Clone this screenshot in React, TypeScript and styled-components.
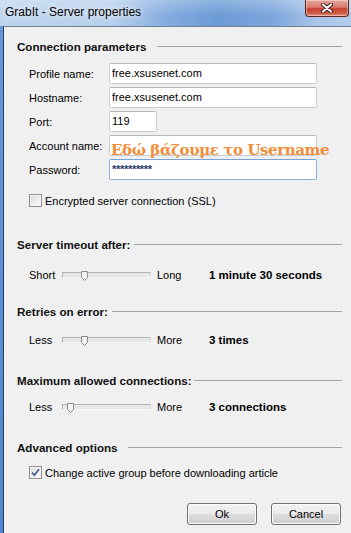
import React from 'react';
import styled, { createGlobalStyle } from 'styled-components';

const GlobalStyle = createGlobalStyle`
  html, body {
    margin: 0;
    padding: 0;
    background: #f0f0f0;
  }

  body {
    font-family: "Liberation Sans", Arial, sans-serif;
    font-size: 11px;
    color: #000;
  }
`;

function CloseGlyph() {
  return (
    <svg width="12" height="10" viewBox="0 0 12 10">
      <path d="M2 1.5 L10 8.5 M10 1.5 L2 8.5" stroke="#3b1a16" strokeWidth="4" strokeLinecap="round" />
      <path d="M2 1.5 L10 8.5 M10 1.5 L2 8.5" stroke="#fff" strokeWidth="2.2" strokeLinecap="round" />
    </svg>
  );
}

function Thumb() {
  return (
    <svg width="7" height="10" viewBox="0 0 7 10">
      <path d="M0.5 0.5 H6.5 V6.5 L3.5 9.5 L0.5 6.5 Z" fill="#f4f4f4" stroke="#8c8c8c" />
    </svg>
  );
}

function CheckMark() {
  return (
    <svg width="9" height="9" viewBox="0 0 9 9">
      <path d="M1 4.6 L3.4 7.2 L8 1.2" fill="none" stroke="#4b5f92" strokeWidth="1.8" />
    </svg>
  );
}

function Header({ title, gap = 10, top }: { title: string; gap?: number; top: number }) {
  return (
    <SectionHeader $gap={gap} $top={top}>
      <span>{title}</span>
      <Rule />
    </SectionHeader>
  );
}

function Slider({
  low,
  high,
  value,
  pos,
  top,
}: {
  low: string;
  high: string;
  value: string;
  pos: number;
  top: number;
}) {
  return (
    <SliderRow $top={top}>
      <SliderLabel $width={33}>{low}</SliderLabel>
      <Track>
        <ThumbHolder style={{ left: pos }}>
          <Thumb />
        </ThumbHolder>
      </Track>
      <SliderLabel $width={52}>{high}</SliderLabel>
      <Value>{value}</Value>
    </SliderRow>
  );
}

export default function App() {
  return (
    <>
      <GlobalStyle />
      <Window>
        <TitleBar>
          <Title>GrabIt - Server properties</Title>
          <CloseButton>
            <CloseGlyph />
          </CloseButton>
        </TitleBar>

        <Content>
          <Header title="Connection parameters" top={12} />
          <FormGrid>
            <FieldLabel>Profile name:</FieldLabel>
            <Field $width={208}>free.xsusenet.com</Field>
            <FieldLabel>Hostname:</FieldLabel>
            <Field $width={208}>free.xsusenet.com</Field>
            <FieldLabel>Port:</FieldLabel>
            <Field $width={48}>119</Field>
            <FieldLabel>Account name:</FieldLabel>
            <Field $width={208}>
              <Annotation>Εδώ βάζουμε το Username</Annotation>
            </Field>
            <FieldLabel>Password:</FieldLabel>
            <Field $width={208} $focused>
              <Stars>**********</Stars>
            </Field>
          </FormGrid>
          <CheckRow $top={14}>
            <Box />
            <span>Encrypted server connection (SSL)</span>
          </CheckRow>

          <Header title="Server timeout after:" gap={4} top={30} />
          <Slider low="Short" high="Long" value="1 minute 30 seconds" pos={18} top={17} />

          <Header title="Retries on error:" gap={4} top={22} />
          <Slider low="Less" high="More" value="3 times" pos={18} top={15} />

          <Header title="Maximum allowed connections:" gap={2} top={26} />
          <Slider low="Less" high="More" value="3 connections" pos={4} top={13} />

          <Header title="Advanced options" top={26} />
          <CheckRow $top={12}>
            <Box>
              <CheckMark />
            </Box>
            <span>Change active group before downloading article</span>
          </CheckRow>

          <ButtonRow>
            <Button>Ok</Button>
            <Button>Cancel</Button>
          </ButtonRow>
        </Content>
      </Window>
    </>
  );
}

const Window = styled.div`
  width: 351px;
  height: 533px;
  overflow: hidden;
  display: flex;
  flex-direction: column;
  background: linear-gradient(180deg, #6b98d6 0%, #5486cf 100%);
`;

const TitleBar = styled.div`
  height: 26px;
  flex: none;
  display: flex;
  align-items: flex-start;
  justify-content: space-between;
  background:
    linear-gradient(180deg, rgba(255, 255, 255, 0.25) 0%, rgba(255, 255, 255, 0) 60%),
    linear-gradient(90deg, #bdd4ee 0%, #b6cfec 32%, #84abdf 48%, #6b9ad6 62%, #7ea6dc 78%, #a9c5e8 90%, #b3ccea 100%);
`;

const Title = styled.div`
  padding: 5px 0 0 5px;
  font-family: "Liberation Sans", Arial, sans-serif;
  font-size: 12px;
  line-height: 15px;
  color: #000;
  text-shadow: 0 0 6px rgba(255, 255, 255, 0.9), 0 0 10px rgba(255, 255, 255, 0.7);
`;

const CloseButton = styled.div`
  width: 44px;
  height: 17px;
  margin-right: 2px;
  box-sizing: border-box;
  display: flex;
  align-items: center;
  justify-content: center;
  border: 1px solid #5e2620;
  border-top: none;
  border-radius: 0 0 4px 4px;
  background: linear-gradient(180deg, #e6a89e 0%, #d7796b 45%, #c4412f 55%, #d0604b 85%, #e79a86 100%);
  box-shadow: inset 0 0 0 1px rgba(255, 255, 255, 0.35);
`;

const Content = styled.div`
  flex: 1;
  margin-left: 3px;
  border-left: 1px solid #213f6c;
  border-top: 1px solid #6f7f92;
  background: #f0f0f0;
  padding-right: 9px;
`;

const SectionHeader = styled.div<{ $gap: number; $top: number }>`
  display: flex;
  align-items: center;
  gap: ${(p) => p.$gap}px;
  height: 14px;
  margin-top: ${(p) => p.$top}px;
  padding-left: 13px;
  font-size: 11.6px;
  font-weight: bold;
  color: #111;
  white-space: nowrap;
`;

const Rule = styled.div`
  flex: 1;
  height: 1px;
  background: #a3a3a3;
`;

const FormGrid = styled.div`
  display: grid;
  grid-template-columns: 80px auto;
  grid-auto-rows: 21px;
  row-gap: 3px;
  align-items: center;
  margin-top: 10px;
  padding-left: 25px;
`;

const FieldLabel = styled.div`
  white-space: nowrap;
`;

const Field = styled.div<{ $width: number; $focused?: boolean }>`
  position: relative;
  width: ${(p) => p.$width}px;
  height: 21px;
  box-sizing: border-box;
  padding: 0 2px;
  border: 1px solid ${(p) => (p.$focused ? '#8db2dc' : '#c9ced6')};
  border-top-color: ${(p) => (p.$focused ? '#7aa3d3' : '#b5bac2')};
  border-radius: 2px;
  background: #fff;
  line-height: 19px;
  white-space: nowrap;
`;

const Annotation = styled.span`
  position: absolute;
  left: 1px;
  top: 5px;
  font-family: "DejaVu Serif", "Liberation Serif", serif;
  font-weight: bold;
  font-size: 15px;
  letter-spacing: -0.4px;
  line-height: 18px;
  color: #f28c38;
  pointer-events: none;
`;

const Stars = styled.span`
  color: #1f3a6a;
  font-weight: bold;
  letter-spacing: -0.3px;
`;

const CheckRow = styled.div<{ $top: number }>`
  display: flex;
  align-items: center;
  gap: 3px;
  height: 13px;
  margin-top: ${(p) => p.$top}px;
  padding-left: 25px;
  white-space: nowrap;
`;

const Box = styled.div`
  width: 13px;
  height: 13px;
  box-sizing: border-box;
  display: flex;
  align-items: center;
  justify-content: center;
  border: 1px solid #8e8f8f;
  background: linear-gradient(135deg, #d6d9dd 0%, #eceef0 55%, #fafafa 100%);
  box-shadow: inset 0 0 0 1px #f6f6f6;
`;

const SliderRow = styled.div<{ $top: number }>`
  display: flex;
  align-items: center;
  height: 14px;
  margin-top: ${(p) => p.$top}px;
  padding-left: 25px;
  white-space: nowrap;
`;

const SliderLabel = styled.div<{ $width: number }>`
  width: ${(p) => p.$width}px;
  flex: none;
`;

const Track = styled.div`
  position: relative;
  width: 89px;
  height: 6px;
  margin-right: 6px;
  box-sizing: border-box;
  flex: none;
  border: 1px solid;
  border-color: #b3b3b3 #dadada #f6f6f6 #b3b3b3;
  background: #e6e8e8;
`;

const ThumbHolder = styled.div`
  position: absolute;
  top: -2px;
  width: 7px;
  height: 10px;
  line-height: 0;
`;

const Value = styled.div`
  font-size: 11.5px;
  font-weight: bold;
`;

const ButtonRow = styled.div`
  display: flex;
  justify-content: flex-end;
  gap: 14px;
  margin-top: 24px;
  padding-right: 1px;
`;

const Button = styled.div`
  width: 70px;
  height: 22px;
  box-sizing: border-box;
  display: flex;
  align-items: center;
  justify-content: center;
  border: 1px solid #707070;
  border-radius: 3px;
  background: linear-gradient(180deg, #f2f2f2 0%, #ebebeb 48%, #dddddd 52%, #cfcfcf 100%);
  box-shadow: inset 0 0 0 1px #fbfbfb;
  font-size: 11px;
`;
